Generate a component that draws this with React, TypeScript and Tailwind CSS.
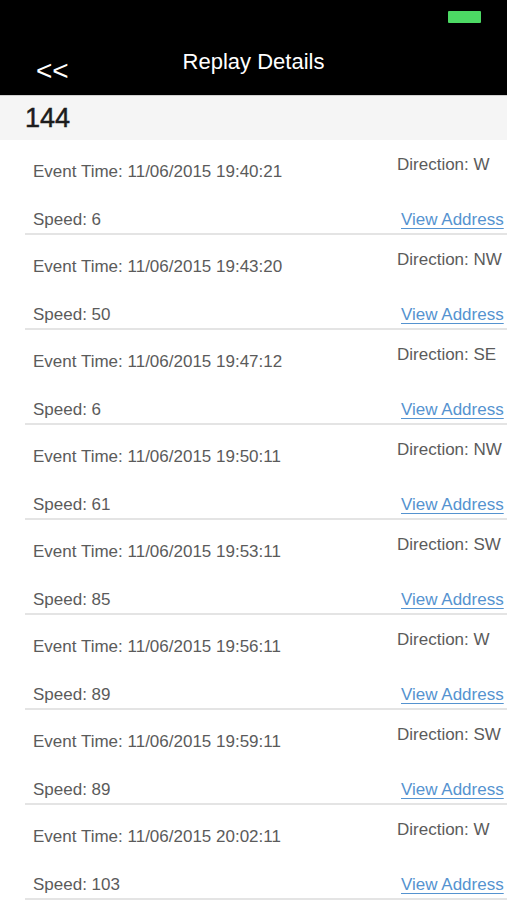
import React from "react";

const rows = [
  { time: "11/06/2015 19:40:21", dir: "W", speed: "6" },
  { time: "11/06/2015 19:43:20", dir: "NW", speed: "50" },
  { time: "11/06/2015 19:47:12", dir: "SE", speed: "6" },
  { time: "11/06/2015 19:50:11", dir: "NW", speed: "61" },
  { time: "11/06/2015 19:53:11", dir: "SW", speed: "85" },
  { time: "11/06/2015 19:56:11", dir: "W", speed: "89" },
  { time: "11/06/2015 19:59:11", dir: "SW", speed: "89" },
  { time: "11/06/2015 20:02:11", dir: "W", speed: "103" },
];

export default function App() {
  return (
    <div
      className="w-[507px] h-[900px] overflow-hidden bg-white"
      style={{ fontFamily: '"Liberation Sans", Arial, sans-serif' }}
    >
      {/* Header */}
      <div className="h-[95px] bg-black pt-[11px]">
        <div className="flex justify-end pr-[26px]">
          <div className="w-[33px] h-[12px] rounded-[1px] bg-[#4cd964]" />
        </div>
        <div className="grid grid-cols-[1fr_auto_1fr] items-start mt-[26px]">
          <div className="pl-[36px] pt-[6px] text-[28px] leading-[32px] text-white">
            &lt;&lt;
          </div>
          <div className="text-[22px] leading-[26px] text-white">Replay Details</div>
          <div />
        </div>
      </div>

      {/* Sub header */}
      <div className="h-[45px] bg-[#f5f5f5] border-t border-[#d0d0d0] pl-[25px] pt-[7px]">
        <div className="text-[27px] leading-[30px] text-[#1c1c1c] [-webkit-text-stroke:0.5px_#1c1c1c]">
          144
        </div>
      </div>

      {/* Rows */}
      <div className="flex flex-col">
        {rows.map((r, i) => (
          <div
            key={i}
            className="ml-[25px] h-[95px] shrink-0 flex border-b-2 border-[#e4e4e4] text-[17px] leading-[20px] text-[#5b5b5b]"
          >
            <div className="flex-1 pl-[8px] flex flex-col">
              <div className="mt-[22px]">Event Time: {r.time}</div>
              <div className="mt-[28px]">Speed: {r.speed}</div>
            </div>
            <div className="w-[110px] flex flex-col">
              <div className="mt-[15px]">Direction: {r.dir}</div>
              <div className="mt-[35px] pl-[4px]">
                <span className="text-[#5593d0] underline underline-offset-[3px]">View Address</span>
              </div>
            </div>
          </div>
        ))}
      </div>
    </div>
  );
}
